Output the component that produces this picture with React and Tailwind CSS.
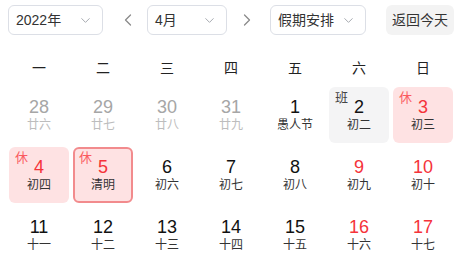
import { ChevronDown, ChevronLeft, ChevronRight } from 'lucide-react'

const weekdays = ['一', '二', '三', '四', '五', '六', '日']

const days = [
    { d: 28, l: '廿六', muted: true },
    { d: 29, l: '廿七', muted: true },
    { d: 30, l: '廿八', muted: true },
    { d: 31, l: '廿九', muted: true },
    { d: 1, l: '愚人节' },
    { d: 2, l: '初二', tag: '班' },
    { d: 3, l: '初三', tag: '休', red: true },
    { d: 4, l: '初四', tag: '休', red: true },
    { d: 5, l: '清明', tag: '休', red: true, selected: true },
    { d: 6, l: '初六' },
    { d: 7, l: '初七' },
    { d: 8, l: '初八' },
    { d: 9, l: '初九', red: true },
    { d: 10, l: '初十', red: true },
    { d: 11, l: '十一' },
    { d: 12, l: '十二' },
    { d: 13, l: '十三' },
    { d: 14, l: '十四' },
    { d: 15, l: '十五' },
    { d: 16, l: '十六', red: true },
    { d: 17, l: '十七', red: true },
]

function Select({ label, width }) {
    return (
        <div
            className={`flex items-center justify-between h-[30px] border border-[#dcdfe6] rounded-md pl-[7px] pr-[9px] text-[14px] text-[#333] ${width}`}
        >
            <span>{label}</span>
            <ChevronDown size={15} strokeWidth={1.5} className="text-[#a0a4ab]" />
        </div>
    )
}

function Cell({ day }) {
    let box = 'bg-transparent'
    if (day.tag === '班') box = 'bg-[#f4f4f5]'
    else if (day.tag === '休') box = 'bg-[#fee2e3]'
    if (day.selected) box = 'bg-[#fee2e3] border-2 border-[#f28b8d]'

    let num = 'text-[#111]'
    if (day.muted) num = 'text-[#a6a6a6]'
    else if (day.red) num = 'text-[#f5333a]'

    return (
        <div className="p-[2px] h-[60px]">
            <div className={`relative h-[56px] rounded-md flex flex-col items-center justify-center ${box}`}>
                {day.tag && (
                    <span
                        className={`absolute ${day.selected ? 'left-[4px] top-[1px]' : 'left-[6px] top-[3px]'} text-[13px] leading-[16px] ${day.tag === '休' ? 'text-[#fa5a5f]' : 'text-[#444]'}`}
                    >
                        {day.tag}
                    </span>
                )}
                <span className={`text-[18px] leading-[20px] ${num}`}>{day.d}</span>
                <span className={`text-[12px] leading-[16px] ${day.muted ? 'text-[#bdbdbd]' : 'text-[#333]'}`}>
                    {day.l}
                </span>
            </div>
        </div>
    )
}

export default function App() {
    return (
        <div
            className="w-[468px] h-[264px] bg-white overflow-hidden"
            style={{ fontFamily: '"Liberation Sans", "Noto Sans CJK SC", sans-serif' }}
        >
            {/* -- Toolbar -- */}
            <div className="flex items-center pt-[5px] pl-[8px]">
                <Select label="2022年" width="w-[95px]" />
                <ChevronLeft size={20} strokeWidth={1.5} className="ml-[15px] text-[#8a8a8a]" />
                <Select label="4月" width="w-[80px] ml-[9px]" />
                <ChevronRight size={20} strokeWidth={1.5} className="ml-[10px] text-[#8a8a8a]" />
                <Select label="假期安排" width="w-[96px] ml-[13px]" />
                <button className="ml-[20px] h-[30px] w-[68px] rounded-md bg-[#f3f3f3] text-[14px] text-[#333]">
                    返回今天
                </button>
            </div>

            {/* -- Weekdays -- */}
            <div className="grid grid-cols-7 w-[448px] ml-[7px] mt-[17px] h-[33px] items-center">
                {weekdays.map((w) => (
                    <div key={w} className="text-center text-[14px] text-[#222]">
                        {w}
                    </div>
                ))}
            </div>

            {/* -- Days -- */}
            <div className="grid grid-cols-7 w-[448px] ml-[7px]">
                {days.map((day) => (
                    <Cell key={`${day.d}-${day.l}`} day={day} />
                ))}
            </div>
        </div>
    )
}
